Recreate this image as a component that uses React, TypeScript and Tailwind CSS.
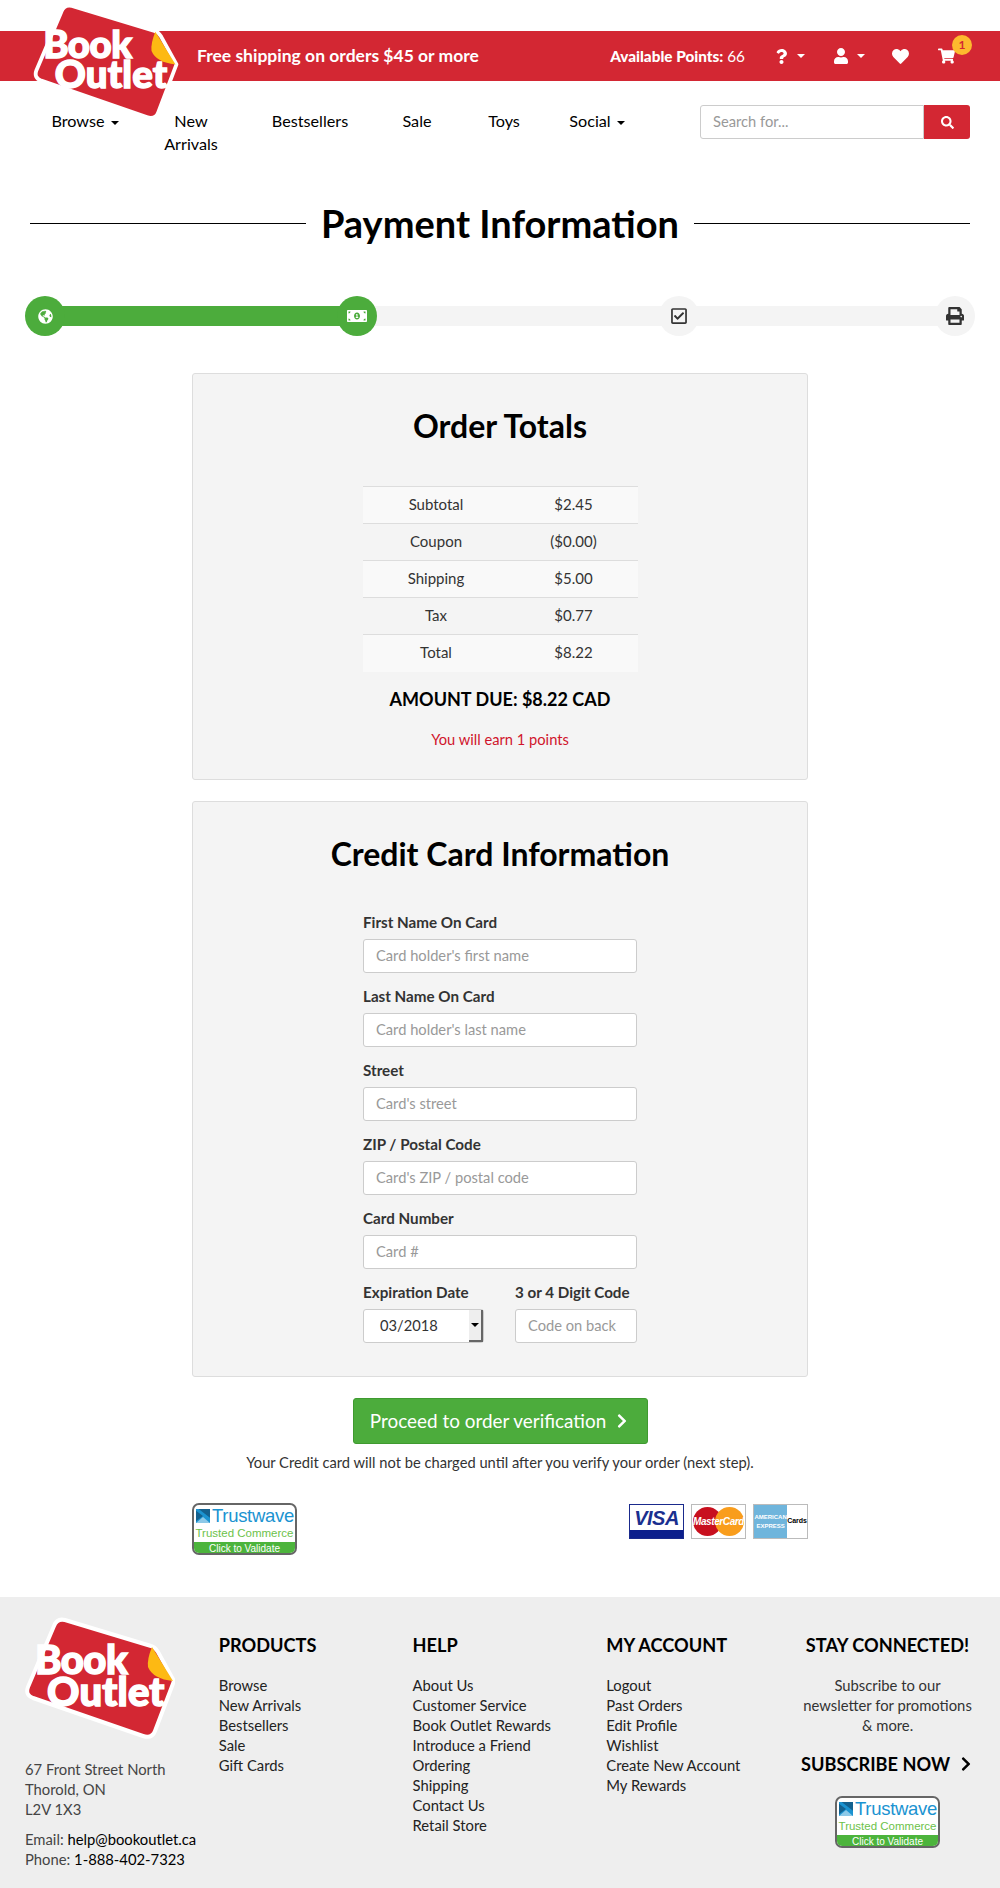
import {
  FaChevronRight,
  FaGlobeAmericas,
  FaHeart,
  FaMoneyBillAlt,
  FaPrint,
  FaQuestion,
  FaRegCheckSquare,
  FaSearch,
  FaShoppingCart,
  FaUser,
} from "react-icons/fa";

const FONT = "[font-family:Lato,'Open_Sans',sans-serif]";

function Caret({ className = "" }: { className?: string }) {
  return <span className={`inline-block h-0 w-0 border-x-[4px] border-t-[4px] border-x-transparent ${className}`} />;
}

function Logo({ className = "" }: { className?: string }) {
  return (
    <svg viewBox="0 0 150 122" className={className}>
      <path
        d="M40 3 L126 29 Q130 30 133 35 L149 64 L130 114 Q127 122 118 119 L8 81 Q0 78 3 70 L29 9 Q32 1 40 3 Z"
        fill="#d32733"
        stroke="#fff"
        strokeWidth="4"
        strokeLinejoin="round"
      />
      <path d="M127 30 L148 64 Q128 62 123 50 Q122 42 127 30 Z" fill="#fdb913" />
      <text x="10" y="57" fontFamily="Lato" fontWeight="900" fontSize="40" letterSpacing="-0.5" fill="#fff" stroke="#fff" strokeWidth="1.5">
        Book
      </text>
      <text x="22" y="89" fontFamily="Lato" fontWeight="900" fontSize="40" letterSpacing="0.2" fill="#fff" stroke="#fff" strokeWidth="1.5">
        Outlet
      </text>
    </svg>
  );
}

function Trustwave() {
  return (
    <div className="flex h-[52px] w-[105px] flex-col overflow-hidden rounded-[7px] border-2 border-[#666] bg-white">
      <div className="flex h-[20px] items-center gap-[2px] pl-[2px] pt-[2px]">
        <svg viewBox="0 0 16 16" className="h-[14px] w-[14px] shrink-0">
          <rect width="16" height="16" fill="#1b93d1" />
          <path d="M0 2 L8 8 L0 14 Z M3 0 L16 0 L16 10 Z" fill="#14618f" />
          <path d="M0 16 L8 9 L16 16 Z" fill="#fff" opacity="0.5" />
        </svg>
        <span className="text-[18.5px] leading-none tracking-[-0.3px] text-[#1b93d1] [font-family:'Liberation_Sans',sans-serif]">Trustwave</span>
      </div>
      <div className="flex-1 text-center text-[11.5px] leading-[17px] text-[#6cc24a] [font-family:'Liberation_Sans',sans-serif]">Trusted Commerce</div>
      <div className="h-[13px] bg-[#4cb43c] text-center text-[10px] leading-[13px] text-white [font-family:'Liberation_Sans',sans-serif]">Click to Validate</div>
    </div>
  );
}

function Visa() {
  return (
    <div className="flex h-[35px] w-[55px] flex-col border border-[#1a2a8c] bg-white">
      <div className="flex flex-1 items-center justify-center text-[20px] font-black italic leading-none tracking-[-0.5px] text-[#1a2f8f] [font-family:'Liberation_Sans',sans-serif]">
        VISA
      </div>
      <div className="h-[8px] bg-[#0c1f8c]" />
    </div>
  );
}

function MasterCard() {
  return (
    <div className="relative flex h-[35px] w-[55px] items-center justify-center border border-[#bbb] bg-white">
      <span className="h-[29px] w-[29px] rounded-full bg-[#c8101e]" />
      <span className="-ml-[7px] h-[29px] w-[29px] rounded-full bg-[#f99d1c]" />
      <span className="absolute text-[10px] font-bold italic tracking-[-0.4px] text-white [font-family:'Liberation_Sans',sans-serif]">MasterCard</span>
    </div>
  );
}

function Amex() {
  return (
    <div className="flex h-[35px] w-[55px] border border-[#bbb] bg-white">
      <div className="flex w-[34px] flex-col justify-center bg-[#6fb5dc] text-center text-[6px] font-bold leading-[9px] text-white [font-family:'Liberation_Sans',sans-serif]">
        <span>AMERICAN</span>
        <span>EXPRESS</span>
      </div>
      <div className="flex-1 self-center text-[7px] font-bold text-black [font-family:'Liberation_Sans',sans-serif]">Cards</div>
    </div>
  );
}

function Step({ done, children }: { done?: boolean; children: React.ReactNode }) {
  return (
    <div className={`flex h-10 w-10 items-center justify-center rounded-full ${done ? "bg-[#4cac3c] text-white" : "bg-[#f4f4f4] text-[#333]"}`}>
      {children}
    </div>
  );
}

function Field({ label, placeholder }: { label: string; placeholder: string }) {
  return (
    <div className="mb-[12px]">
      <label className="mb-[5px] block text-[15.2px] font-bold leading-[23px] text-[#333]">{label}</label>
      <input
        placeholder={placeholder}
        className="block h-[34px] w-full rounded-[3px] border border-[#ccc] bg-white px-3 pb-[2px] text-[14.7px] outline-none placeholder:text-[#999]"
      />
    </div>
  );
}

const totals = [
  ["Subtotal", "$2.45"],
  ["Coupon", "($0.00)"],
  ["Shipping", "$5.00"],
  ["Tax", "$0.77"],
  ["Total", "$8.22"],
];

const nav = [
  { label: "Browse", width: "w-[120px]", caret: true },
  { label: "New Arrivals", width: "w-[92px]" },
  { label: "Bestsellers", width: "w-[146px]" },
  { label: "Sale", width: "w-[68px]" },
  { label: "Toys", width: "w-[106px]" },
  { label: "Social", width: "w-[80px]", caret: true },
];

const footerCols = [
  { title: "PRODUCTS", width: "w-[194px]", links: ["Browse", "New Arrivals", "Bestsellers", "Sale", "Gift Cards"] },
  {
    title: "HELP",
    width: "w-[194px]",
    links: ["About Us", "Customer Service", "Book Outlet Rewards", "Introduce a Friend", "Ordering", "Shipping", "Contact Us", "Retail Store"],
  },
  { title: "MY ACCOUNT", width: "w-[195px]", links: ["Logout", "Past Orders", "Edit Profile", "Wishlist", "Create New Account", "My Rewards"] },
];

export default function App() {
  return (
    <div className={`relative h-[1888px] w-[1000px] overflow-hidden bg-white text-black ${FONT}`}>
      <Logo className="absolute left-[31px] top-[3px] h-[117px] w-[149px]" />

      <header className="mt-[31px] flex h-[50px] items-center bg-[#d32733] pl-[197px] pr-[30px] text-white">
        <div className="text-[17.5px] font-bold">Free shipping on orders $45 or more</div>
        <div className="ml-auto flex items-center">
          <div className="mr-[29px] text-[15.3px]">
            <span className="font-black">Available Points:</span> 66
          </div>
          <FaQuestion className="h-[15px] w-[15px]" />
          <Caret className="ml-[8px] border-t-white" />
          <FaUser className="ml-[28px] h-[16px] w-[16px]" />
          <Caret className="ml-[8px] border-t-white" />
          <FaHeart className="ml-[26px] h-[17px] w-[19px]" />
          <span className="relative ml-[28px] mr-[15px] block">
            <FaShoppingCart className="h-[16px] w-[17px]" />
            <span className="absolute -right-[17px] -top-[13px] flex h-[20px] w-[20px] items-center justify-center rounded-full bg-[#fdb92e] text-[12px] font-bold text-[#d32733]">
              1
            </span>
          </span>
        </div>
      </header>

      <nav className="flex items-start pl-[25px] pr-[30px] pt-[24px]">
        <ul className="flex w-[645px] items-start pt-[4px] text-[16.2px] leading-[23px]">
          {nav.map((item) => (
            <li key={item.label} className={`${item.width} px-3 text-center ${item.caret ? "whitespace-nowrap" : ""}`}>
              {item.label}
              {item.caret && <Caret className="ml-[6px] align-middle border-t-black" />}
            </li>
          ))}
        </ul>
        <div className="ml-auto flex h-[34px] w-[270px]">
          <input
            placeholder="Search for..."
            className="h-full min-w-0 flex-1 rounded-l-[3px] border border-[#ccc] bg-white px-3 pb-[2px] text-[14.7px] outline-none placeholder:text-[#999]"
          />
          <button className="flex w-[46px] items-center justify-center rounded-r-[3px] bg-[#d32733] text-white">
            <FaSearch className="h-[13px] w-[13px]" />
          </button>
        </div>
      </nav>

      <div className="mt-[43px] flex items-center gap-[15px] pl-[30px] pr-[30px]">
        <div className="h-px flex-1 bg-black" />
        <h1 className="text-[38px] font-bold leading-[50px]">Payment Information</h1>
        <div className="h-px flex-1 bg-black" />
      </div>

      <div className="relative mx-[25px] mt-[48px] flex h-10 items-center">
        <div className="absolute inset-x-[10px] top-[10px] h-5 bg-[#f4f4f4]" />
        <div className="absolute left-[10px] top-[10px] h-5 w-[320px] bg-[#4cac3c]" />
        <div className="relative flex w-full">
          <Step done><FaGlobeAmericas className="h-[15px] w-[15px]" /></Step>
          <div className="ml-[272px]">
            <Step done><FaMoneyBillAlt className="h-[18px] w-[20px]" /></Step>
          </div>
          <div className="ml-[282px]">
            <Step><FaRegCheckSquare className="h-[18px] w-[18px]" /></Step>
          </div>
          <div className="ml-auto">
            <Step><FaPrint className="h-[18px] w-[18px]" /></Step>
          </div>
        </div>
      </div>

      <main className="mx-[192px] mt-[37px] w-[616px]">
        <section className="h-[407px] rounded-[3px] border border-[#ddd] bg-[#f4f4f4] pt-[31px] text-center">
          <h2 className="text-[32px] font-bold leading-[42px]">Order Totals</h2>
          <table className="mx-auto mt-[39px] w-[275px] border-collapse text-[15px] text-[#333]">
            <tbody>
              {totals.map(([name, value], i) => (
                <tr key={name} className={`h-[37px] border-t border-[#ddd] ${i % 2 === 0 ? "bg-[#f9f9f9]" : ""}`}>
                  <td className="w-[147px] pb-[2px] text-center">{name}</td>
                  <td className="pb-[2px] text-center">{value}</td>
                </tr>
              ))}
            </tbody>
          </table>
          <p className="mt-[14px] text-[18px] font-bold leading-[26px]">AMOUNT DUE: $8.22 CAD</p>
          <p className="mt-[17px] text-[14.7px] leading-[20px] text-[#d0142c]">You will earn 1 points</p>
        </section>

        <section className="mt-[21px] h-[576px] rounded-[3px] border border-[#ddd] bg-[#f4f4f4] pt-[31px]">
          <h2 className="text-center text-[32px] font-bold leading-[42px]">Credit Card Information</h2>
          <form className="mx-auto mt-[36px] w-[274px]">
            <Field label="First Name On Card" placeholder="Card holder's first name" />
            <Field label="Last Name On Card" placeholder="Card holder's last name" />
            <Field label="Street" placeholder="Card's street" />
            <Field label="ZIP / Postal Code" placeholder="Card's ZIP / postal code" />
            <Field label="Card Number" placeholder="Card #" />
            <div className="flex justify-between">
              <div className="w-[121px]">
                <label className="mb-[5px] block whitespace-nowrap text-[15.2px] font-bold leading-[23px] text-[#333]">Expiration Date</label>
                <div className="flex h-[34px] rounded-[3px] border border-[#ccc] bg-white text-[14.7px] text-[#333]">
                  <span className="flex-1 pl-[16px] leading-[30px]">03/2018</span>
                  <span className="flex w-[14px] items-center justify-center border-b-2 border-r-2 border-[#666] bg-[#eee]">
                    <Caret className="border-t-black" />
                  </span>
                </div>
              </div>
              <div className="w-[122px]">
                <label className="mb-[5px] block whitespace-nowrap text-[15.2px] font-bold leading-[23px] text-[#333]">3 or 4 Digit Code</label>
                <input
                  placeholder="Code on back"
                  className="block h-[34px] w-full rounded-[3px] border border-[#ccc] bg-white px-3 pb-[2px] text-[14.7px] outline-none placeholder:text-[#999]"
                />
              </div>
            </div>
          </form>
        </section>

        <button className="mx-auto mt-[21px] flex h-[46px] w-[295px] items-center justify-center gap-2 rounded-[3px] border border-[#3f9a30] bg-[#4cac3c] text-[18.9px] text-white">
          Proceed to order verification <FaChevronRight className="h-[16px] w-[16px]" />
        </button>
        <p className="mt-[8px] text-center text-[14.7px] leading-[20px] text-[#333]">
          Your Credit card will not be charged until after you verify your order (next step).
        </p>

        <div className="mt-[31px] flex items-start">
          <Trustwave />
          <div className="ml-auto flex gap-[7px] pt-px">
            <Visa />
            <MasterCard />
            <Amex />
          </div>
        </div>
      </main>

      <footer className="absolute inset-x-0 bottom-0 flex h-[291px] bg-[#eee] pl-[25px] pr-[26px] pt-[38px] text-[14.8px] text-[#222]">
        <div className="w-[194px] text-[#444]">
          <Logo className="-mt-[18px] ml-0 h-[122px] w-[150px]" />
          <p className="mt-[20px] leading-[20px]">
            67 Front Street North
            <br />
            Thorold, ON
            <br />
            L2V 1X3
          </p>
          <p className="mt-[10px] whitespace-nowrap leading-[20px]">
            Email: <span className="text-black">help@bookoutlet.ca</span>
            <br />
            Phone: <span className="text-black">1-888-402-7323</span>
          </p>
        </div>
        {footerCols.map((col) => (
          <div key={col.title} className={col.width}>
            <h3 className="text-[18.2px] font-bold leading-[20px] text-black">{col.title}</h3>
            <ul className="mt-[20px] leading-[20px]">
              {col.links.map((link) => (
                <li key={link}>{link}</li>
              ))}
            </ul>
          </div>
        ))}
        <div className="flex-1 text-center">
          <h3 className="whitespace-nowrap text-[18.2px] font-bold leading-[20px] text-black">STAY CONNECTED!</h3>
          <p className="mt-[20px] leading-[20px] text-[#333]">Subscribe to our newsletter for promotions &amp; more.</p>
          <div className="mt-[14px] flex items-center justify-center gap-2 whitespace-nowrap text-[18.2px] font-bold leading-[30px] text-black">
            SUBSCRIBE NOW <FaChevronRight className="h-[16px] w-[16px]" />
          </div>
          <div className="mt-[17px] flex justify-center">
            <Trustwave />
          </div>
        </div>
      </footer>
    </div>
  );
}
